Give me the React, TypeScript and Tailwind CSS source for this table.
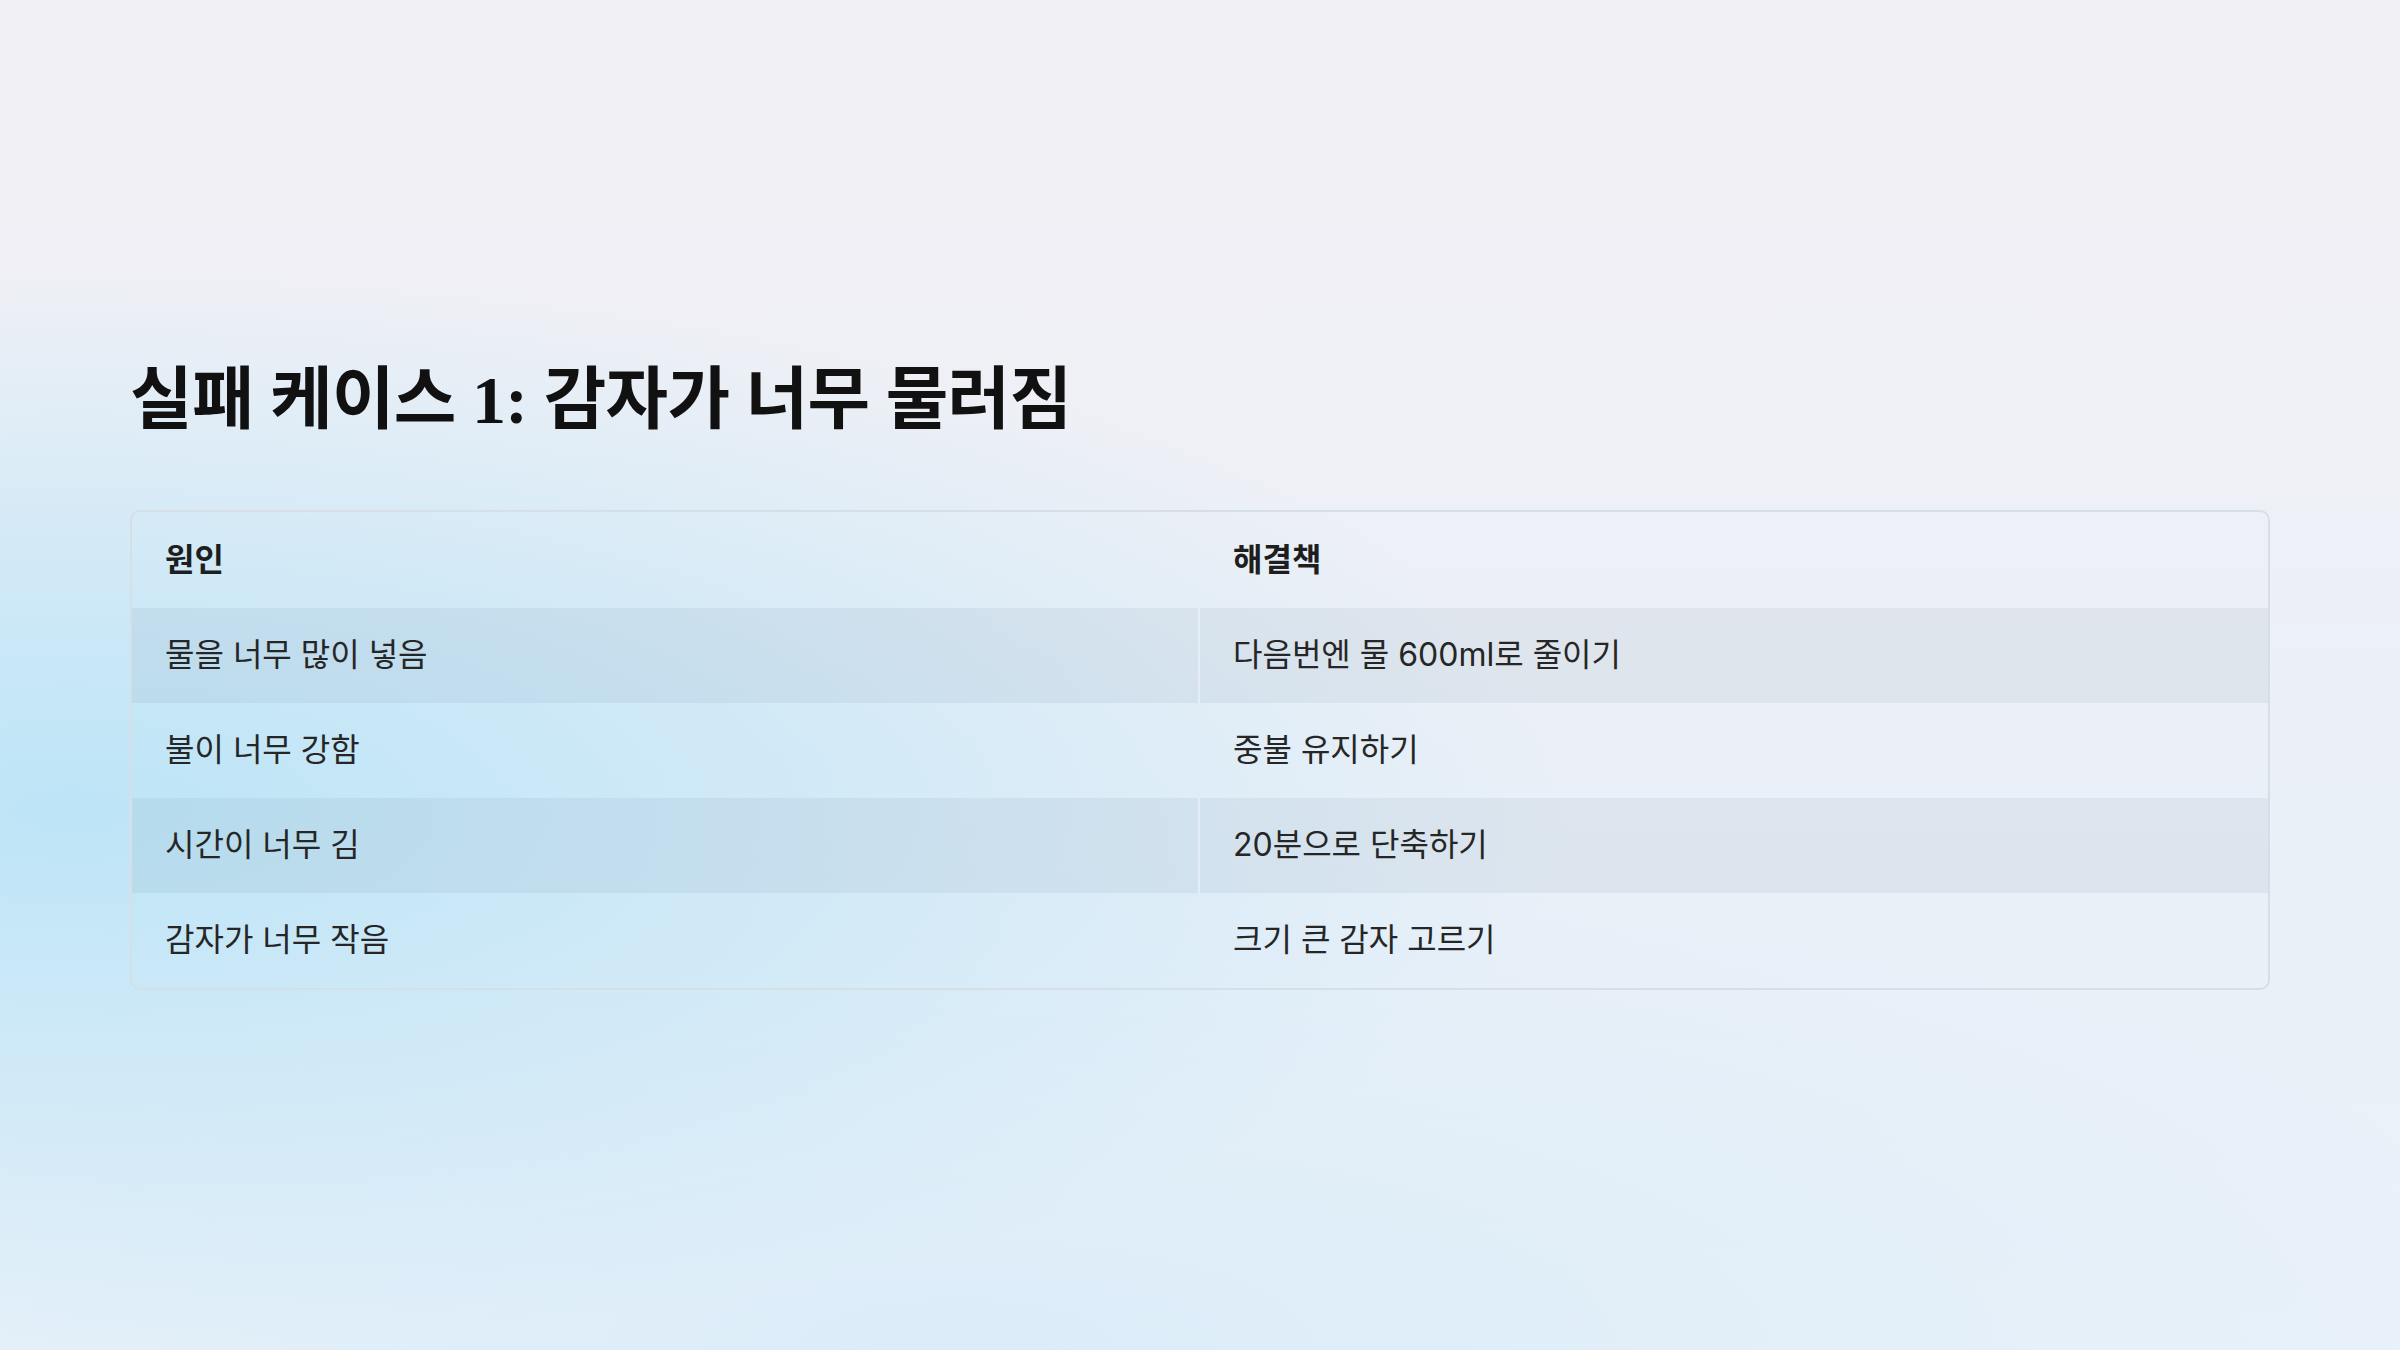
const rows = [
  ["물을 너무 많이 넣음", "다음번엔 물 600ml로 줄이기"],
  ["불이 너무 강함", "중불 유지하기"],
  ["시간이 너무 김", "20분으로 단축하기"],
  ["감자가 너무 작음", "크기 큰 감자 고르기"],
];

export default function App() {
  return (
    <div className="min-h-screen w-full flex flex-col justify-center px-[130px] bg-[radial-gradient(ellipse_1500px_540px_at_3%_60%,#bde5f7_0%,rgba(196,230,247,0.75)_40%,transparent_100%),radial-gradient(ellipse_1600px_500px_at_40%_100%,#dbecf8_0%,transparent_100%),linear-gradient(180deg,#f1f0f5_0%,#eff0f6_30%,#e9f0f8_65%,#eaf2fa_100%)]">
      <h1 className="font-['Liberation_Serif','Noto_Sans_CJK_KR',serif] font-bold text-[68px] leading-[1.2] tracking-[-0.01em] text-[#111]">
        실패 케이스 1: 감자가 너무 물러짐
      </h1>

      <div className="mt-[68px] rounded-[10px] border-2 border-[#d6dee6] overflow-hidden font-['Inter','Noto_Sans_CJK_KR',sans-serif] text-[32px] text-[#262626]">
        <div className="grid grid-cols-2 h-[96px] items-center font-bold text-[#1e1e1e]">
          <div className="px-[33px]">원인</div>
          <div className="px-[33px]">해결책</div>
        </div>
        {rows.map(([cause, fix], i) => (
          <div
            key={cause}
            className={`grid grid-cols-2 h-[95px] ${i % 2 === 0 ? "bg-[#4a6a85]/[0.08]" : ""}`}
          >
            <div className={`flex items-center px-[33px] ${i % 2 === 0 ? "border-r-2 border-white/40" : ""}`}>{cause}</div>
            <div className="flex items-center px-[33px]">{fix}</div>
          </div>
        ))}
      </div>
    </div>
  );
}
